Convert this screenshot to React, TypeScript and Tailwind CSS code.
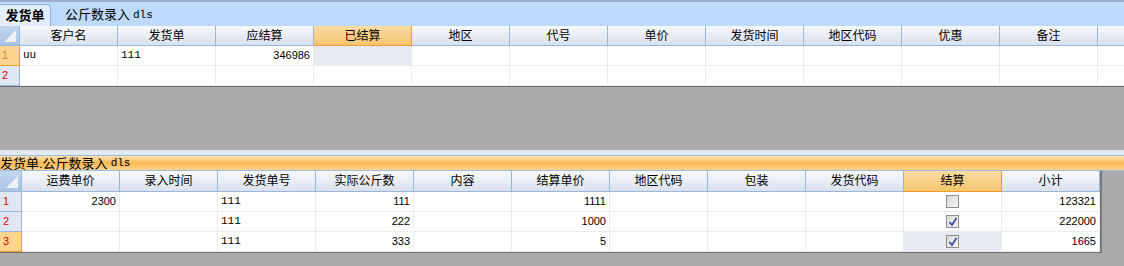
import React from "react";

const cjk = "font-['Tahoma','Liberation_Sans','Noto_Sans_CJK_SC',sans-serif]";

const topCols = ["客户名", "发货单", "应结算", "已结算", "地区", "代号", "单价", "发货时间", "地区代码", "优惠", "备注"];
const topRows: { cells: string[]; right: number[] }[] = [
  { cells: ["uu", "111", "346986", "", "", "", "", "", "", "", ""], right: [2] },
  { cells: ["", "", "", "", "", "", "", "", "", "", ""], right: [] },
];

const bottomCols = ["运费单价", "录入时间", "发货单号", "实际公斤数", "内容", "结算单价", "地区代码", "包装", "发货代码", "结算", "小计"];
const bottomRows = [
  { cells: ["2300", "", "111", "111", "", "1111", "", "", "", "", "123321"], checked: false },
  { cells: ["", "", "111", "222", "", "1000", "", "", "", "", "222000"], checked: true },
  { cells: ["", "", "111", "333", "", "5", "", "", "", "", "1665"], checked: true },
];
const bottomLeft = [2];

function Corner({ w }: { w: string }) {
  return (
    <div className={`${w} relative h-full border-r border-b border-[#9ab7db] bg-gradient-to-b from-[#c4d6ee] to-[#a9c3e6]`}>
      <svg className="absolute right-[3px] bottom-[3px]" width="12" height="12" viewBox="0 0 12 12">
        <polygon points="12,0 12,12 0,12" fill="#eef2f8" />
      </svg>
    </div>
  );
}

function HeadCell({ label, hot }: { label: string; hot?: boolean }) {
  return (
    <div
      className={
        hot
          ? "flex h-full w-[98px] shrink-0 items-center justify-center border-r border-b border-[#f39a2a] bg-gradient-to-b from-[#fbdda4] to-[#f5c56e] text-[12px] text-black"
          : "flex h-full w-[98px] shrink-0 items-center justify-center border-r border-b border-[#9ab7db] bg-gradient-to-b from-[#f8f9fc] to-[#d9e1ed] text-[12px] text-black"
      }
    >
      {label}
    </div>
  );
}

function CheckBox({ checked }: { checked: boolean }) {
  return (
    <div className="flex h-[13px] w-[13px] items-center justify-center border border-[#8e8e8e] bg-gradient-to-br from-[#d8d8d8] to-[#f7f7f7]">
      {checked ? (
        <svg width="10" height="10" viewBox="0 0 10 10">
          <path d="M1.5 5 L4 8 L8.5 1" fill="none" stroke="#3d50a0" strokeWidth="1.8" />
        </svg>
      ) : null}
    </div>
  );
}

export default function App() {
  return (
    <div className={`h-[266px] w-[1124px] overflow-hidden bg-[#ababab] ${cjk}`}>
      {/* upper grid with tabs */}
      <div className="border-t-2 border-[#9eadcb] bg-[#bedbfd]">
        <div className="flex h-[24px] items-end">
          <div className="flex h-[22px] w-[51px] items-center justify-center rounded-tr-[4px] border-t border-r border-[#8cb0e0] bg-[#e3edfb] text-[13px] font-bold text-black">
            发货单
          </div>
          <div className="flex h-[22px] items-center pl-[14px] text-[13px] text-black">
            公斤数录入<span className="ml-[3px] font-['Liberation_Mono',monospace] text-[11px]">dls</span>
          </div>
        </div>
      </div>
      <div className="bg-white">
        <div className="flex h-[20px]">
          <Corner w="w-[20px]" />
          {topCols.map((c, i) => (
            <HeadCell key={c} label={c} hot={i === 3} />
          ))}
          <div className="h-full flex-1 border-b border-[#9ab7db] bg-gradient-to-b from-[#f8f9fc] to-[#d9e1ed]" />
        </div>
        {topRows.map((r, ri) => (
          <div key={ri} className="flex h-[20px]">
            <div
              className={
                ri === 0
                  ? "flex h-full w-[20px] shrink-0 items-center border-r border-b border-[#f39a2a] bg-[#fdd48f] pl-[2px] text-[11px] text-[#d48a10]"
                  : "flex h-full w-[20px] shrink-0 items-center border-r border-b border-[#9ab7db] bg-[#dfe7f4] pl-[2px] text-[11px] text-[#e00000]"
              }
            >
              {ri + 1}
            </div>
            {r.cells.map((v, ci) => (
              <div
                key={ci}
                className={`flex h-full w-[98px] shrink-0 items-center border-r border-b border-[#ececec] px-[3px] text-[11px] text-black ${
                  r.right.includes(ci) ? "justify-end" : "justify-start"
                } ${ri === 0 && ci === 3 ? "bg-[#e7eaf3]" : ""} ${
                  ci < 2 ? "font-['Liberation_Mono',monospace]" : ""
                }`}
              >
                {v}
              </div>
            ))}
            <div className="h-full flex-1 border-b border-[#ececec]" />
          </div>
        ))}
      </div>
      <div className="h-px bg-[#6e6e6e]" />

      {/* gray gap */}
      <div className="h-[63px]" />

      {/* lower grid */}
      <div className="h-[5px] bg-[#e3eaf7]" />
      <div className="border-y border-[#9ebbe1]">
        <div className="flex h-[14px] items-center bg-gradient-to-b from-[#fee3b0] via-[#fbb850] to-[#fdd28f] text-[13px] leading-none text-black">
          <span>发货单.公斤数录入</span>
          <span className="ml-[3px] font-['Liberation_Mono',monospace] text-[11px]">dls</span>
        </div>
      </div>
      <div className="w-[1102px] border-r-2 border-b border-r-[#7a7a7a] border-b-[#6e6e6e] bg-white">
        <div className="flex h-[21px]">
          <Corner w="w-[22px]" />
          {bottomCols.map((c, i) => (
            <HeadCell key={c} label={c} hot={i === 9} />
          ))}
        </div>
        {bottomRows.map((r, ri) => (
          <div key={ri} className="flex h-[20px]">
            <div
              className={
                ri === 2
                  ? "flex h-full w-[22px] shrink-0 items-center border-r border-b border-[#f39a2a] bg-[#fdd48f] pl-[3px] text-[11px] text-[#e00000]"
                  : "flex h-full w-[22px] shrink-0 items-center border-r border-b border-[#9ab7db] bg-[#dfe7f4] pl-[3px] text-[11px] text-[#e00000]"
              }
            >
              {ri + 1}
            </div>
            {r.cells.map((v, ci) => (
              <div
                key={ci}
                className={`flex h-full w-[98px] shrink-0 items-center border-r border-b border-[#ececec] px-[3px] text-[11px] text-black ${
                  ci === 9 ? "justify-center" : bottomLeft.includes(ci) ? "justify-start" : "justify-end"
                } ${ri === 2 && ci === 9 ? "bg-[#e7eaf3]" : ""} ${
                  ci === 2 ? "font-['Liberation_Mono',monospace]" : ""
                }`}
              >
                {ci === 9 ? <CheckBox checked={r.checked} /> : v}
              </div>
            ))}
          </div>
        ))}
      </div>
    </div>
  );
}
